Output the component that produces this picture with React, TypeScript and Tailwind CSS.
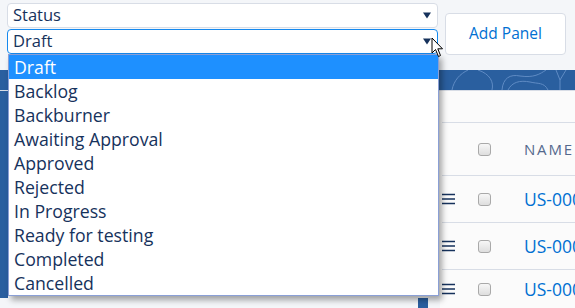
import React from "react";

const statuses = [
  "Draft",
  "Backlog",
  "Backburner",
  "Awaiting Approval",
  "Approved",
  "Rejected",
  "In Progress",
  "Ready for testing",
  "Completed",
  "Cancelled",
];

const Caret = () => (
  <svg width="8" height="7" viewBox="0 0 8 7" className="shrink-0">
    <path d="M0 0.5 H8 L4 6.5 Z" fill="#16325c" />
  </svg>
);

const Checkbox = () => (
  <div className="h-[13px] w-[13px] rounded-[3px] border border-[#a9a9a9] bg-gradient-to-b from-[#f7f7f7] to-[#dedede]" />
);

const Burger = () => (
  <svg width="14" height="12" viewBox="0 0 14 12">
    <path d="M0 1.5 H13 M0 6 H13 M0 10.5 H13" stroke="#16325c" strokeWidth="1.6" />
  </svg>
);

const TableRow: React.FC<{ height: string; last?: boolean }> = ({ height, last }) => (
  <div
    className={`flex items-center ${height} ${last ? "" : "border-b border-[#d8dde6]"}`}
  >
    <div className="w-[36px] shrink-0">
      <Burger />
    </div>
    <div className="w-[46px] shrink-0">
      <Checkbox />
    </div>
    <span className="whitespace-nowrap text-[17.5px] text-[#0070d2]">US-0001</span>
  </div>
);

const App: React.FC = () => {
  return (
    <div
      className="relative h-[308px] w-[575px] overflow-hidden bg-[#f4f6f9]"
      style={{ fontFamily: '"Open Sans", "Noto Sans", sans-serif' }}
    >
      {/* top controls */}
      <div className="flex h-[70px] gap-[7px] pl-[7px] pt-[3px]">
        <div className="flex w-[431px] shrink-0 flex-col gap-[1px]">
          <div className="flex h-[25px] items-center justify-between rounded-[4px] border border-[#d8dde6] bg-white pl-[5px] pr-[6px] text-[16.5px] text-[#16325c]">
            <span>Status</span>
            <Caret />
          </div>
          <div className="flex h-[25px] items-center justify-between rounded-[4px] border border-[#1589ee] bg-white pl-[5px] pr-[6px] text-[16.5px] text-[#16325c]">
            <span>Draft</span>
            <Caret />
          </div>
        </div>
        <button className="mt-[10px] h-[42px] w-[121px] shrink-0 rounded-[4px] border border-[#d8dde6] bg-white text-[15.5px] text-[#0070d2]">
          Add Panel
        </button>
      </div>

      {/* blue band */}
      <div className="h-[21px] border-b border-[#d8dde6] bg-[#2a5f9f]">
        <svg width="575" height="20" viewBox="0 0 575 20" fill="none" stroke="#5f8bc4" strokeWidth="1">
          <path d="M452 20 C454 10 460 4 468 0" />
          <path d="M478 0 C490 4 494 12 492 20" />
          <path d="M502 20 C503 8 510 4 520 6 C534 8 540 4 546 0" />
          <path d="M508 20 C512 12 520 10 530 12 C538 14 544 12 548 20" />
          <path d="M556 0 L560 10 L566 0 M560 10 L560 20" />
          <path d="M20 20 C24 10 40 6 60 0" />
          <path d="M120 0 C140 10 160 14 190 20" />
          <path d="M300 20 C310 10 330 6 350 8 C370 10 380 4 390 0" />
        </svg>
      </div>

      {/* content */}
      <div className="flex h-[217px]">
        <div className="flex w-[440px] shrink-0 flex-col bg-[#f4f6f9]">
          <div className="h-[207px] w-[8px] bg-[#2a5f9f]" />
          <div className="ml-[418px] h-[10px] w-[10px] bg-[#2a5f9f]" />
        </div>
        <div className="min-w-0 flex-1 overflow-hidden bg-[#fbfbfb] pl-[2px]">
          <div className="h-[32px] border-b border-[#d8dde6]" />
          <div className="flex h-[53px] items-center border-b border-[#d8dde6]">
            <div className="w-[36px] shrink-0" />
            <div className="w-[46px] shrink-0">
              <Checkbox />
            </div>
            <span className="whitespace-nowrap text-[15px] tracking-[0.12em] text-[#54698d]">
              NAME
            </span>
          </div>
          <TableRow height="h-[47px]" />
          <TableRow height="h-[47px]" />
          <TableRow height="h-[38px]" last />
        </div>
      </div>

      {/* open dropdown list */}
      <div className="absolute left-[8px] top-[54px] w-[431px] border border-[#8a9fd6] bg-white shadow-[3px_4px_6px_rgba(0,0,0,0.35)]">
        {statuses.map((s, i) => (
          <div
            key={s}
            className={`flex h-[24px] items-center pl-[5px] text-[17.7px] ${
              i === 0 ? "bg-[#1e90ff] text-white" : "text-[#16325c]"
            }`}
          >
            {s}
          </div>
        ))}
      </div>

      {/* mouse pointer */}
      <svg
        className="absolute left-[431px] top-[37px]"
        width="13"
        height="21"
        viewBox="0 0 13 21"
      >
        <path
          d="M1 1 L1 16 L4.5 12.5 L7.5 19.5 L9.5 18.5 L6.8 11.8 L11.5 11.8 Z"
          fill="white"
          stroke="black"
          strokeWidth="1"
          strokeLinejoin="round"
        />
      </svg>
    </div>
  );
};

export default App;
